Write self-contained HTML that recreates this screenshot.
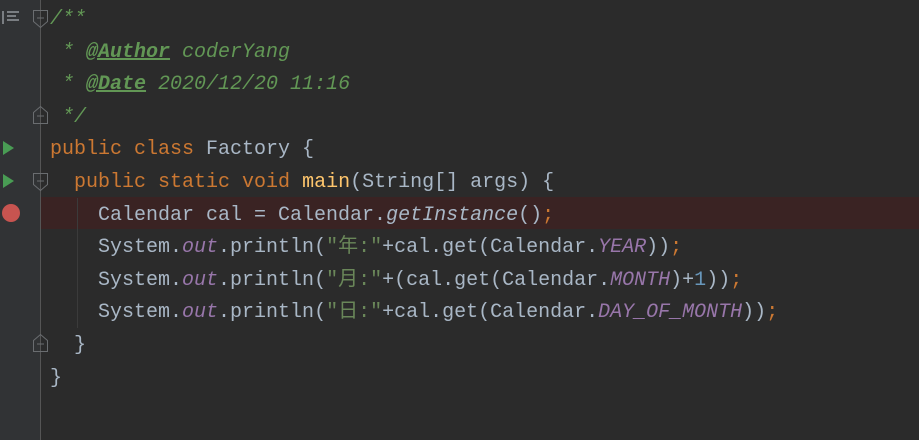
<!DOCTYPE html>
<html><head><style>
body{margin:0;width:919px;height:440px;background:#2b2b2b;overflow:hidden;position:relative;font-family:"Liberation Mono","Noto Sans CJK SC",monospace;}
.gutter{position:absolute;left:0;top:0;width:40px;height:440px;background:#313335;border-right:1px solid #555;}
.code{position:absolute;left:50px;top:4px;font-size:20px;line-height:32.6px;color:#a9b7c6;white-space:pre;}
.hl{position:absolute;left:41px;top:197px;width:878px;height:32px;background:#3a2323;}
.k{color:#cc7832}.c{color:#629755;font-style:italic}.t{color:#629755;font-style:italic;font-weight:bold;text-decoration:underline}
.s{color:#6a8759}.f{color:#9876aa;font-style:italic}.m{color:#ffc66d}.i{font-style:italic}
.guide{position:absolute;left:77px;width:1px;background:#3b3b3b;top:198px;height:130px}
</style></head><body>
<div class="gutter"></div>
<div class="hl"></div>
<div class="guide"></div>
<svg width="60" height="440" style="position:absolute;left:0;top:0">
<g fill="#7a7e82"><rect x="2" y="11" width="2" height="13"/><rect x="7" y="11" width="12" height="2"/><rect x="7" y="15" width="9" height="2"/><rect x="7" y="19" width="12" height="2"/></g>
<g fill="none" stroke="#6a6d70" stroke-width="1">
<path d="M33.5 10.5h14v11l-7 6l-7-6z M37 18h7"/>
<path d="M33.5 123.5h14v-11l-7-6l-7 6z M37 116h7"/>
<path d="M33.5 173.5h14v11l-7 6l-7-6z M37 181h7"/>
<path d="M33.5 351.5h14v-11l-7-6l-7 6z M37 344h7"/>
</g>
<path d="M3 141l11 7l-11 7z" fill="#499c54"/>
<path d="M3 174l11 7l-11 7z" fill="#499c54"/>
<circle cx="11" cy="213" r="9" fill="#c75450"/>
</svg>
<div class="code"><span class="c">/**</span>
<span class="c"> * </span><span class="t">@Author</span><span class="c"> coderYang</span>
<span class="c"> * </span><span class="t">@Date</span><span class="c"> 2020/12/20 11:16</span>
<span class="c"> */</span>
<span class="k">public class </span>Factory {
  <span class="k">public static void </span><span class="m">main</span>(String[] args) {
    Calendar cal = Calendar.<span class="i">getInstance</span>()<span class="k">;</span>
    System.<span class="f">out</span>.println(<span class="s">"年:"</span>+cal.get(Calendar.<span class="f">YEAR</span>))<span class="k">;</span>
    System.<span class="f">out</span>.println(<span class="s">"月:"</span>+(cal.get(Calendar.<span class="f">MONTH</span>)+<span style="color:#6897bb">1</span>))<span class="k">;</span>
    System.<span class="f">out</span>.println(<span class="s">"日:"</span>+cal.get(Calendar.<span class="f">DAY_OF_MONTH</span>))<span class="k">;</span>
  }
}</div>
</body></html>
